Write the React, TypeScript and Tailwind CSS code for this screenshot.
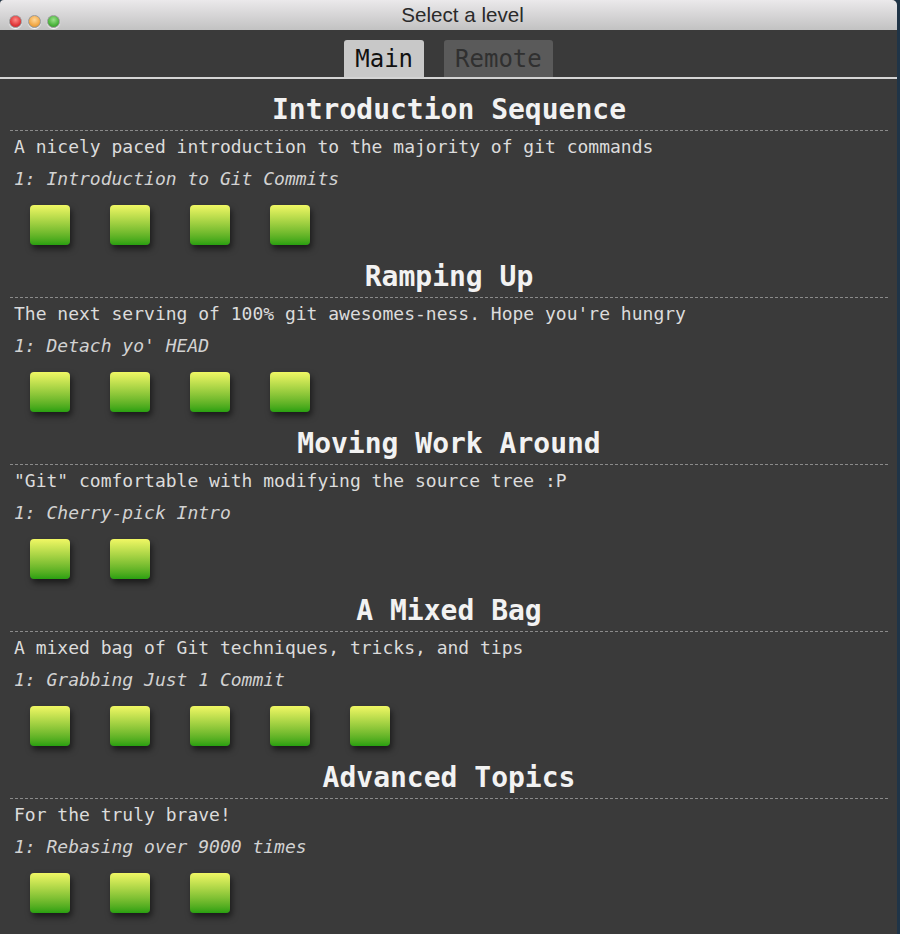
import type { FC } from "react";

interface Sequence {
  name: string;
  about: string;
  first: string;
  count: number;
}

const sequences: Sequence[] = [
  {
    name: "Introduction Sequence",
    about: "A nicely paced introduction to the majority of git commands",
    first: "1: Introduction to Git Commits",
    count: 4,
  },
  {
    name: "Ramping Up",
    about: "The next serving of 100% git awesomes-ness. Hope you're hungry",
    first: "1: Detach yo' HEAD",
    count: 4,
  },
  {
    name: "Moving Work Around",
    about: '"Git" comfortable with modifying the source tree :P',
    first: "1: Cherry-pick Intro",
    count: 2,
  },
  {
    name: "A Mixed Bag",
    about: "A mixed bag of Git techniques, tricks, and tips",
    first: "1: Grabbing Just 1 Commit",
    count: 5,
  },
  {
    name: "Advanced Topics",
    about: "For the truly brave!",
    first: "1: Rebasing over 9000 times",
    count: 3,
  },
];

const mono = "font-['DejaVu_Sans_Mono',monospace]";

const Light: FC<{ tone: string }> = ({ tone }) => (
  <span className={`block w-[13px] h-[13px] rounded-full border border-[#9a9a9a] shadow-[0_1px_1px_rgba(255,255,255,0.9)] ${tone}`} />
);

const SequenceBlock: FC<{ seq: Sequence }> = ({ seq }) => (
  <section className="mx-[10px] mr-[9px] pb-[13px]">
    <h2 className="text-center text-[28px] leading-[36px] pb-[2px] font-bold text-[#f2f2f2] border-b border-dashed border-[#8a8a8a]">
      {seq.name}
    </h2>
    <p className="pl-[4px] mt-[4px] text-[18px] leading-[24px] text-[#dcdcdc]">{seq.about}</p>
    <p className="pl-[4px] mt-[8px] text-[18px] leading-[24px] italic text-[#d2d2d2]">{seq.first}</p>
    <div className="flex gap-[40px] pl-[20px] mt-[14px] mb-[1px]">
      {Array.from({ length: seq.count }).map((_, i) => (
        <div
          key={i}
          className="w-[40px] h-[40px] rounded-[4px] bg-linear-to-b from-[#f0f764] to-[#27a010] shadow-[2px_4px_6px_rgba(0,0,0,0.55)]"
        />
      ))}
    </div>
  </section>
);

const App: FC = () => {
  return (
    <div className="w-[900px] h-[934px] overflow-hidden bg-[#1f3447] flex">
      <div className="w-[897px] h-full flex flex-col bg-[#3a3a3a] rounded-tr-[5px] rounded-tl-[4px] overflow-hidden">
        <header className="relative h-[30px] shrink-0 bg-linear-to-b from-[#ebe9eb] to-[#c2c2c2] flex items-center justify-center">
          <div className="absolute left-[9px] top-[15px] flex gap-[6px]">
            <Light tone="bg-[radial-gradient(circle_at_50%_35%,#ff8a86,#e0383a_60%,#b8282a)]" />
            <Light tone="bg-[radial-gradient(circle_at_50%_35%,#ffd89a,#f2a948_60%,#c7832a)]" />
            <Light tone="bg-[radial-gradient(circle_at_50%_35%,#9ae28a,#4cb43e_60%,#2f8a26)]" />
          </div>
          <span className="ml-[28px] font-['Liberation_Sans',Arial,sans-serif] text-[20.6px] leading-[24px] text-[#2a2a2a]">
            Select a level
          </span>
        </header>

        <nav className={`${mono} flex justify-center gap-[20px] pt-[10px] border-b-2 border-[#d4d4d4]`}>
          <div className="h-[37px] px-[11px] rounded-t-[3px] bg-[#c8c8c8] text-[#111] text-[24px] leading-[38px]">
            Main
          </div>
          <div className="h-[37px] px-[11px] rounded-t-[3px] bg-[#5a5a5a] text-[#303030] text-[24px] leading-[38px]">
            Remote
          </div>
        </nav>

        <main className={`${mono} pt-[13px]`}>
          {sequences.map((s) => (
            <SequenceBlock key={s.name} seq={s} />
          ))}
        </main>
      </div>
    </div>
  );
};

export default App;
